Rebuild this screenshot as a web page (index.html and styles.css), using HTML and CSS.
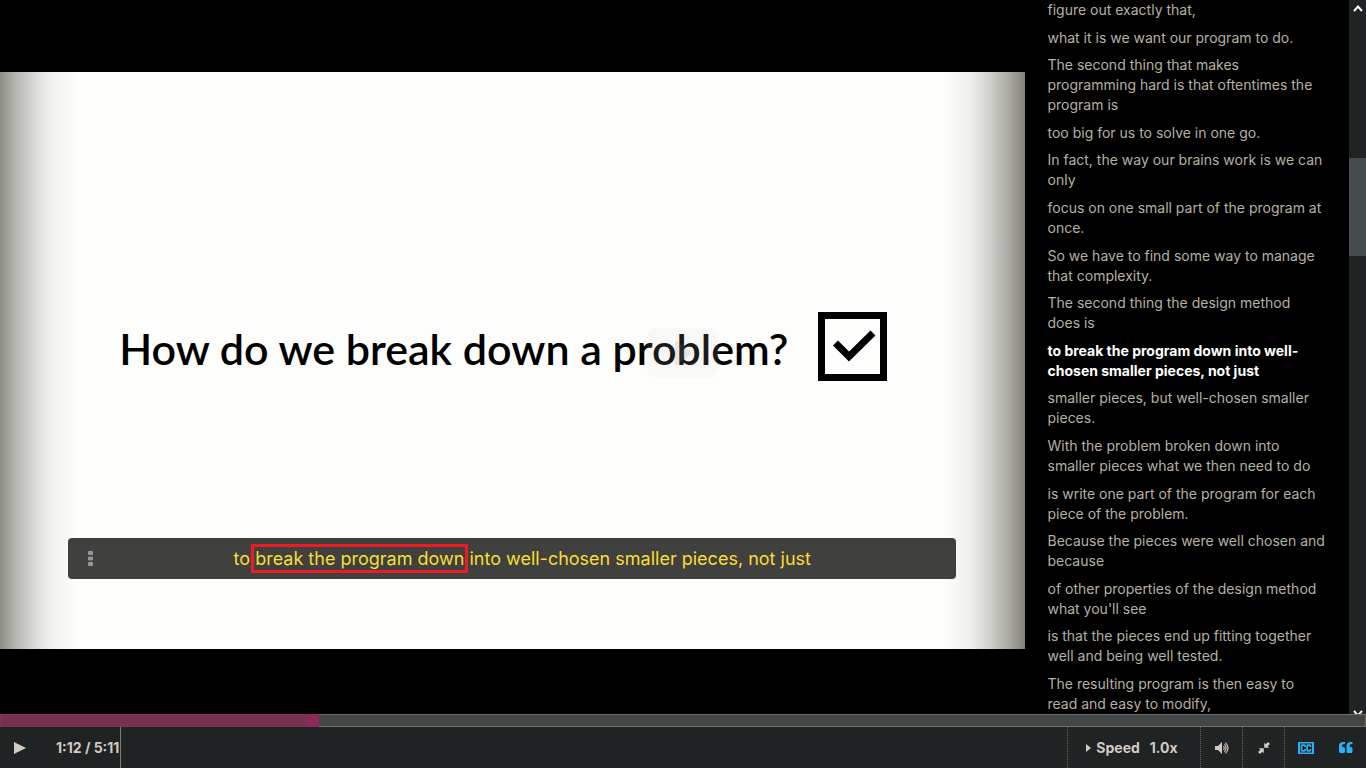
FILE: index.html
```html
<!DOCTYPE html>
<html lang="en">
<head>
<meta charset="utf-8">
<title>How do we break down a problem?</title>
<link rel="stylesheet" href="styles.css">
</head>
<body>
<main class="player">
  <div class="stage">
    <section class="video-pane" aria-label="Video">
      <div class="video">
        <div class="slide">
          <h1 class="slide-title">How do we break down a problem?</h1>
          <svg class="slide-check" viewBox="0 0 69 69" aria-hidden="true"><rect x="3.5" y="3.5" width="62" height="62" fill="none" stroke="#000" stroke-width="7"/><path d="M17.500 31L31 44.500L55 21" fill="none" stroke="#000" stroke-width="7"/></svg>
        </div>
        <button class="big-play" type="button" aria-label="Play video"><svg viewBox="0 0 20 32" aria-hidden="true"><path d="M0 3Q0 0 3 1L18 13Q21 16 18 19L3 31Q0 32 0 29Z" fill="currentColor"/></svg></button>
        <div class="caption">
          <svg class="grip" viewBox="0 0 5 15" aria-hidden="true"><rect width="5" height="4" rx="1"/><rect y="5.500" width="5" height="4" rx="1"/><rect y="11" width="5" height="4" rx="1"/></svg>
          <p class="caption-text">to <mark class="highlight">break the program down</mark> into well-chosen smaller pieces, not just</p>
        </div>
      </div>
    </section>
    <aside class="transcript" aria-label="Transcript">
      <ol class="lines">
        <li>figure out exactly that,</li>
        <li>what it is we want our program to do.</li>
        <li>The second thing that makes programming hard is that oftentimes the program is</li>
        <li>too big for us to solve in one go.</li>
        <li>In fact, the way our brains work is we can only</li>
        <li>focus on one small part of the program at once.</li>
        <li>So we have to find some way to manage that complexity.</li>
        <li>The second thing the design method does is</li>
        <li class="current">to break the program down into well-chosen smaller pieces, not just</li>
        <li>smaller pieces, but well-chosen smaller pieces.</li>
        <li>With the problem broken down into smaller pieces what we then need to do</li>
        <li>is write one part of the program for each piece of the problem.</li>
        <li>Because the pieces were well chosen and because</li>
        <li>of other properties of the design method what you'll see</li>
        <li>is that the pieces end up fitting together well and being well tested.</li>
        <li>The resulting program is then easy to read and easy to modify,</li>
      </ol>
      <div class="scrollbar" aria-hidden="true">
        <svg class="arrow" viewBox="0 0 10 8"><path d="M1 7L5 2.500L9 7"/></svg>
        <div class="track"><div class="thumb"></div></div>
        <svg class="arrow arrow-down" viewBox="0 0 10 8"><path d="M1 1L5 5.500L9 1"/></svg>
      </div>
    </aside>
  </div>
  <div class="progress" role="progressbar" aria-label="Video position" aria-valuemin="0" aria-valuemax="311" aria-valuenow="72"><div class="played" style="width:23.400%"><span class="knob"></span></div></div>
  <div class="controls">
    <button class="control play" type="button" aria-label="Play"><svg width="12" height="12" viewBox="0 0 12 12"><path d="M0 0L12 6L0 12Z" fill="currentColor"/></svg></button>
    <div class="time">1:12 / 5:11</div>
    <div class="spacer"></div>
    <button class="control speed" type="button"><svg width="5" height="8" viewBox="0 0 5 8" aria-hidden="true"><path d="M0 0L5 4L0 8Z" fill="currentColor"/></svg><span class="speed-label">Speed</span><span>1.0x</span></button>
    <button class="control icon" type="button" aria-label="Volume"><svg width="14" height="12" viewBox="0 0 14 12"><path d="M0 4H3L7 0V12L3 8H0Z" fill="currentColor"/><path d="M8.500 4Q10 6 8.500 8M9.500 2Q12.500 6 9.500 10M10.500 .5Q15.500 6 10.500 11.500" fill="none" stroke="currentColor" stroke-width="1.100"/></svg></button>
    <button class="control icon" type="button" aria-label="Exit full screen"><svg width="12" height="12" viewBox="0 0 12 12"><path d="M6.200 .8V5.800H11.200L9.700 4.300L12 2L10 0L7.700 2.300ZM5.800 11.200V6.200H.8L2.300 7.700L0 10L2 12L4.300 9.700Z" fill="currentColor"/></svg></button>
    <button class="control icon active" type="button" aria-label="Closed captions"><svg width="16" height="12" viewBox="0 0 16 12"><path fill-rule="evenodd" d="M0 0H16V12H0ZM2 1.500V10.500H14V1.500Z" fill="currentColor"/><path d="M7 4.900V4.200Q7 3.200 6 3.200H4.600Q3.500 3.200 3.500 4.300V7.700Q3.500 8.800 4.600 8.800H6Q7 8.800 7 7.800V7.100M12.500 4.900V4.200Q12.500 3.200 11.500 3.200H10.200Q9.100 3.200 9.100 4.300V7.700Q9.100 8.800 10.200 8.800H11.500Q12.500 8.800 12.500 7.800V7.100" fill="none" stroke="currentColor" stroke-width="1.700"/></svg></button>
    <button class="control icon last active" type="button" aria-label="Turn off transcript"><svg width="14" height="11" viewBox="0 0 14 11"><path id="quote" d="M6 0V2H5Q3 2 3 4V5H4.500Q6 5 6 6.500V9.500Q6 11 4.500 11H1.500Q0 11 0 9.500V4Q0 0 4.500 0Z" fill="currentColor"/><use href="#quote" x="7.500"/></svg></button>
  </div>
</main>
</body>
</html>
```
FILE: styles.css
```css
* { box-sizing: border-box; }
body { margin: 0; background: #000; color: #b7b0a4; font-family: Inter, "Liberation Sans", sans-serif; }
button { margin: 0; padding: 0; border: 0; background: none; color: inherit; font: inherit; cursor: pointer; }

.player { display: flex; flex-direction: column; height: 100vh; }
.stage { display: flex; flex: 1; min-height: 0; overflow: hidden; }

.video-pane { width: 75%; padding-top: 7px; display: flex; align-items: center; }
.video {
  position: relative; width: 100%; aspect-ratio: 16 / 9; background-color: #fdfdfb;
  background-image:
    linear-gradient(to right, #8f8e88 0, #b5b6b1 16px, #d9dad7 34px, #f1f1f0 52px, #fdfdfb 76px, transparent 77px),
    linear-gradient(to left, #85827b 0, #a9a9a3 16px, #cececa 34px, #eeeeec 54px, #fdfdfb 82px, transparent 83px);
}
.slide { display: flex; align-items: center; justify-content: center; gap: 30px; height: 100%; padding: 0 18px 28px 0; }
.slide-title { margin: 0; padding-top: 4px; color: #000; font: 600 43px/52px Lato, sans-serif; white-space: nowrap; }
.slide-check { width: 69px; height: 69px; flex: none; }
.big-play {
  position: absolute; left: 50%; top: 50%; width: 71px; height: 50px; margin: -33px 0 0 135px;
  display: flex; align-items: center; justify-content: center; border-radius: 10px;
  background: rgba(220, 216, 216, .12); color: rgba(130, 130, 130, .15);
}
.big-play svg { width: 16px; height: 30px; }
.caption {
  position: absolute; left: 68px; right: 69px; bottom: 70px; padding: 8px 20px;
  display: flex; align-items: center; border-radius: 4px; background: #40403e;
}
.grip { width: 5px; height: 15px; flex: none; fill: #969696; }
.caption-text { flex: 1; margin: 0; padding-left: 16px; color: #f8de35; font-size: 18px; line-height: 25px; text-align: center; }
.highlight { background: none; color: inherit; outline: 3px solid #ed1c24; outline-offset: 1px; }

.transcript { flex: 1; min-width: 0; display: flex; padding-left: 23px; }
.lines {
  flex: 1; margin: 0; padding: 0 23px 0 0; list-style: none;
  display: flex; flex-direction: column; justify-content: space-between; font-size: 14px; line-height: 20px;
}
.current { color: #fff; font-weight: 700; }
.scrollbar { width: 17px; flex: none; display: flex; flex-direction: column; align-items: center; overflow: hidden; background: #1f2324; }
.arrow { width: 10px; height: 8px; margin: 4px 0; flex: none; fill: none; stroke: #fff; stroke-width: 2; }
.arrow-down { margin: 0 0 -4px; }
.track { flex: 1; width: 100%; padding-top: 142px; }
.thumb { height: 98px; background: #464b4d; }

.progress { height: 13px; border: 1px solid #736b5e; background: #414749; }
.played { display: flex; justify-content: flex-end; height: 13px; margin: -1px; border: 1px solid #8c2e5a; background: #753150; }
.knob { width: 13px; margin: -1px; border-radius: 3px; background: #8d2858; }

.controls { display: flex; height: 41px; background: #1f2324; color: #d0cbc2; font-size: 14px; font-weight: 700; }
.control { display: flex; align-items: center; justify-content: center; }
.play { width: 40px; }
.time { display: flex; align-items: center; padding: 0 1px 0 16px; border-right: 1px solid #857d6f; }
.spacer { flex: 1; }
.speed { width: 133px; padding-right: 4px; border-left: 1px dotted #6a6359; }
.speed-label { margin: 0 10px 0 5px; }
.icon { width: 42px; border-left: 1px dotted #6a6359; }
.last { width: 40px; border-left: 0; }
.active { color: #2db1f5; }
```
